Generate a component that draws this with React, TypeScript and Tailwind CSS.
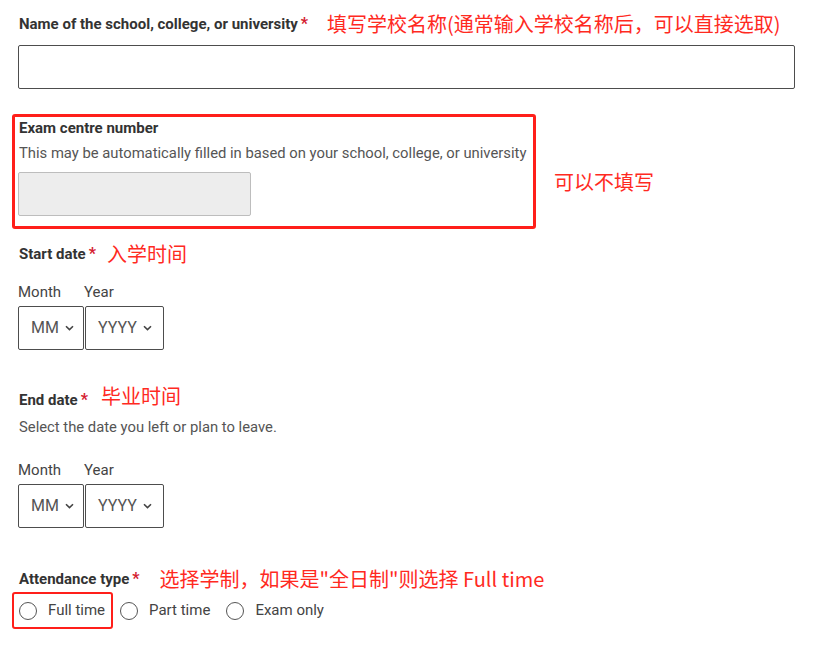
import React from "react";

const Star = () => <span className="ml-[3px] text-[#d4202f] font-bold">*</span>;

const Note = ({ children, className = "" }: { children: React.ReactNode; className?: string }) => (
  <span
    className={"text-[20px] leading-[24px] text-[#ff2a1f] " + className}
    style={{ fontFamily: '"Noto Sans CJK SC", "Microsoft YaHei", sans-serif' }}
  >
    {children}
  </span>
);

const Chevron = () => (
  <svg width="9" height="6" viewBox="0 0 9 6" className="ml-[6px]">
    <path d="M1 1.2 L4.5 4.6 L8 1.2" fill="none" stroke="#444" strokeWidth="1.6" />
  </svg>
);

const Select = ({ text, w }: { text: string; w: string }) => (
  <div className={"h-[44px] border border-[#4d4d4d] rounded-[2px] flex items-center pl-[12px] " + w}>
    <span className="text-[16px] text-[#555]">{text}</span>
    <Chevron />
  </div>
);

const DateGroup = () => (
  <div>
    <div className="flex text-[15px] leading-[20px] text-[#444]">
      <span className="w-[66px]">Month</span>
      <span>Year</span>
    </div>
    <div className="flex mt-[4px] gap-[1px]">
      <Select text="MM" w="w-[66px]" />
      <Select text="YYYY" w="w-[79px]" />
    </div>
  </div>
);

const Radio = ({ label }: { label: string }) => (
  <div className="flex items-center">
    <span className="w-[18px] h-[18px] rounded-full border border-[#555] bg-white" />
    <span className="ml-[11px] text-[15px] text-[#444]">{label}</span>
  </div>
);

export default function App() {
  return (
    <div
      className="w-[830px] h-[646px] bg-white pl-[19px] pt-[12px] text-[#333]"
      style={{ fontFamily: "Roboto, Arial, sans-serif" }}
    >
      <div className="flex items-center h-[24px]">
        <span className="text-[15px] font-bold text-[#333]">Name of the school, college, or university</span>
        <Star />
        <Note className="ml-[19px]">填写学校名称(通常输入学校名称后，可以直接选取)</Note>
      </div>
      <div className="-ml-[1px] mt-[9px] w-[777px] h-[44px] border border-[#4d4d4d] rounded-[2px]" />

      <div className="flex items-center mt-[25px]">
        <div className="-ml-[7px] w-[524px] h-[115px] border-[3px] border-[#ff1f1a] rounded-[3px] pl-[4px] pt-[1px]">
          <div className="text-[15px] leading-[20px] font-bold text-[#333]">Exam centre number</div>
          <div className="mt-[5px] text-[14.8px] leading-[20px] text-[#555] whitespace-nowrap">
            This may be automatically filled in based on your school, college, or university
          </div>
          <div className="-ml-[1px] mt-[9px] w-[233px] h-[44px] bg-[#ededed] border border-[#bdbdbd] rounded-[2px]" />
        </div>
        <Note className="ml-[18px] mt-[20px]">可以不填写</Note>
      </div>

      <div className="flex items-center h-[24px] mt-[13px]">
        <span className="text-[15px] font-bold">Start date</span>
        <Star />
        <Note className="ml-[11px]">入学时间</Note>
      </div>
      <div className="mt-[16px] -ml-[1px]">
        <DateGroup />
      </div>

      <div className="flex items-center h-[24px] mt-[38px]">
        <span className="text-[15px] font-bold">End date</span>
        <Star />
        <Note className="ml-[13px] -mt-[8px]">毕业时间</Note>
      </div>
      <div className="mt-[5px] text-[14.8px] leading-[20px] text-[#555]">Select the date you left or plan to leave.</div>
      <div className="mt-[23px] -ml-[1px]">
        <DateGroup />
      </div>

      <div className="flex items-center h-[24px] mt-[39px]">
        <span className="text-[15px] font-bold">Attendance type</span>
        <Star />
        <Note className="ml-[20px]">选择学制，如果是"全日制"则选择 Full time</Note>
      </div>
      <div className="flex items-center mt-[1px] -ml-[7px]">
        <div className="h-[37px] border-[2px] border-[#ff1f1a] rounded-[3px] pl-[5px] pr-[6px] flex items-center">
          <Radio label="Full time" />
        </div>
        <div className="ml-[7px]">
          <Radio label="Part time" />
        </div>
        <div className="ml-[16px]">
          <Radio label="Exam only" />
        </div>
      </div>
    </div>
  );
}
